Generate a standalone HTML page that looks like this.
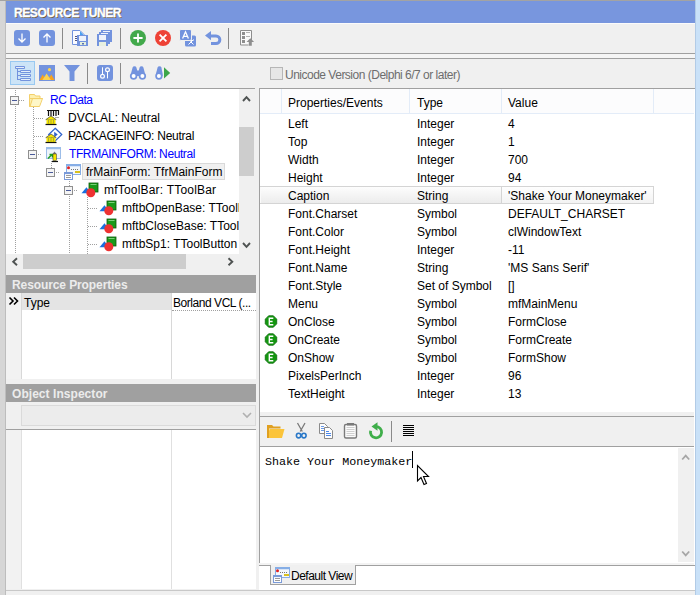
<!DOCTYPE html>
<html><head><meta charset="utf-8">
<style>
*{margin:0;padding:0;box-sizing:border-box}
html,body{width:700px;height:595px;overflow:hidden;background:#f0f0f0}
body{position:relative;font:12px "Liberation Sans",sans-serif;color:#000}
.a{position:absolute}
.t{position:absolute;white-space:nowrap;line-height:14px}
</style></head><body>
<div class="a" style="left:0;top:0;width:5px;height:595px;background:#d6d6d6"></div>
<div class="a" style="left:5px;top:0;width:1px;height:595px;background:#bdbdbd"></div>
<div class="a" style="left:695px;top:0;width:1px;height:595px;background:#b2cbe6"></div><div class="a" style="left:696px;top:0;width:4px;height:595px;background:#c9e1f8"></div>
<div class="a" style="left:0;top:0;width:695px;height:1px;background:#a3a3a3"></div>
<div class="a" style="left:6px;top:590px;width:689px;height:1px;background:#c8c8c8"></div>
<!-- title bar -->
<div class="a" style="left:6px;top:1px;width:689px;height:22px;background:#7896de"></div>
<div class="t" style="left:14px;top:6px;font-weight:bold;font-size:12px;letter-spacing:-0.4px;color:#fff;-webkit-text-stroke:0.35px #fff;text-shadow:1px 1px 0 #6b5a3a">RESOURCE TUNER</div>
<div class="a" style="left:6px;top:23px;width:689px;height:1px;background:#fbfbfb"></div>
<!-- toolbar 1 -->
<div class="a" style="left:6px;top:53px;width:689px;height:1px;background:#a0a0a0"></div>
<div class="a" style="left:6px;top:54px;width:689px;height:4px;background:#f5f5f5"></div>
<div class="a" style="left:6px;top:58px;width:689px;height:1px;background:#a0a0a0"></div>
<svg class="a" style="left:0;top:0" width="700" height="90" viewBox="0 0 700 90">
 <!-- down arrow btn -->
 <rect x="14" y="30" width="16" height="16" rx="3" fill="#7393de"/>
 <path d="M22 33.5v8.5M18.5 38.5l3.5 3.5l3.5-3.5" stroke="#fff" stroke-width="1.3" fill="none"/>
 <!-- up arrow btn -->
 <rect x="39" y="30" width="16" height="16" rx="3" fill="#7393de"/>
 <path d="M47 42.5v-8.5M43.5 37.5l3.5-3.5l3.5 3.5" stroke="#fff" stroke-width="1.3" fill="none"/>
 <rect x="62" y="28" width="1" height="21" fill="#8a8a8a"/>
 <!-- doc + floppy -->
 <path d="M72.5 30.5h7.5l4.5 4.5v9.5h-12z" fill="#fafbff" stroke="#7393de"/>
 <path d="M80 31v4.5h4z" fill="#4aa0f0"/>
 <path d="M75 36.5h2M75 38.5h2M75 40.5h2" stroke="#55557a"/>
 <rect x="77" y="35" width="11" height="11" fill="#7393de"/>
 <rect x="79" y="36" width="7" height="5" fill="#eef2fb"/>
 <rect x="80" y="42" width="6" height="3" fill="#e4efdc"/>
 <rect x="82" y="43" width="2" height="1.5" fill="#5a70b0"/>
 <!-- stacked floppies -->
 <rect x="101" y="30" width="11" height="12" fill="#7393de"/>
 <rect x="103" y="31" width="7" height="2" fill="#eef2fb"/>
 <rect x="99" y="32" width="11" height="12" fill="#7393de"/>
 <rect x="101" y="33" width="7" height="2" fill="#eef2fb"/>
 <rect x="97" y="34" width="11" height="12" fill="#7393de"/>
 <rect x="99" y="35" width="7" height="5" fill="#eef2fb"/>
 <rect x="99" y="42" width="7" height="4" fill="#e8f0e0"/>
 <rect x="120" y="28" width="1" height="21" fill="#8a8a8a"/>
 <!-- green plus -->
 <circle cx="138" cy="38" r="8" fill="#42a94b"/>
 <path d="M138 33.4v9.2M133.4 38h9.2" stroke="#fff" stroke-width="1.8"/>
 <!-- red x -->
 <circle cx="163" cy="38" r="8" fill="#ee4236"/>
 <path d="M159.6 34.6l6.8 6.8M166.4 34.6l-6.8 6.8" stroke="#fff" stroke-width="1.8"/>
 <!-- translate -->
 <rect x="185" y="35.5" width="11" height="11" rx="1.5" fill="#7393de"/>
 <path d="M188.5 44.5l5-5M189 40.5h4.5M190.5 41.5l3 3" stroke="#fff" stroke-width="1" fill="none"/>
 <rect x="179.5" y="29.5" width="12" height="11" rx="1.5" fill="#7393de" stroke="#f0f0f0"/>
 <path d="M182.6 38.6L185.5 31.8L188.4 38.6M183.6 36.4h3.8" stroke="#fff" stroke-width="1.3" fill="none"/>
 <!-- undo -->
 <path d="M210 35.9H216A3.85 3.85 0 0 1 216 43.6H211" stroke="#7393de" stroke-width="3" fill="none"/>
 <path d="M205 35.6L211 30.9V40.3z" fill="#7393de"/>
 <rect x="228" y="28" width="1" height="21" fill="#8a8a8a"/>
 <!-- list up -->
 
 <rect x="241" y="31" width="10.5" height="14" fill="#fafafa"/>
 <rect x="242" y="32" width="3" height="3" fill="#8e8e8e"/>
 <rect x="242" y="36" width="3" height="3" fill="#8e8e8e"/>
 <rect x="242" y="40" width="3" height="3" fill="#8e8e8e"/>
 <path d="M246 32.5h4M246 36.5h4" stroke="#b4b4b4"/>
 <path d="M240.5 30.5h11v10M240.5 30.5v14.5h8" fill="none" stroke="#8e8e8e"/>
 <path d="M250.3 38.2l3.8 3.8h-2.3v3.8h-3v-3.8h-2.3z" fill="#8e8e8e"/>

 <!-- toolbar 2 -->
 <rect x="10.5" y="61.5" width="24" height="23" fill="#cce4f7" stroke="#99c9f1"/>
 <path d="M15.5 66.5h9v2h-9z M20.5 70.5h10v2h-10z M20.5 74.5h10v2h-10z M20.5 78.5h10v2h-10z" fill="#e4eefb" stroke="#7393de"/>
 <path d="M17.5 69v11M18 71.5h2.5M18 75.5h2.5M18 79.5h2.5" stroke="#7393de" fill="none"/>
 <rect x="39" y="65" width="16" height="16" fill="#7393de"/>
 <path d="M39.6 80L42.6 74.6L46 80z M47.6 80L51.3 74.6L54.6 80z" fill="#f7a21e"/>
 <path d="M42.4 80L46.6 73.4L50.9 80z" fill="#fdd34e"/>
 <circle cx="49.5" cy="69.7" r="1.6" fill="#fdd34e"/>
 <path d="M64 65h16l-5.5 6.5v9.5h-5v-9.5z" fill="#7393de"/>
 <rect x="87" y="63" width="1" height="21" fill="#8a8a8a"/>
 <rect x="97" y="65" width="16" height="16" rx="3" fill="#7393de"/>
 <path d="M102.5 67.3v6.8M107.5 71.8v6.6" stroke="#fff" stroke-width="1"/>
 <circle cx="102.5" cy="76.2" r="1.9" fill="none" stroke="#fff" stroke-width="1.2"/>
 <circle cx="107.5" cy="69.7" r="1.9" fill="none" stroke="#fff" stroke-width="1.2"/>
 <rect x="120" y="63" width="1" height="21" fill="#8a8a8a"/>
 <path d="M131 73.5L132.6 67.6Q133 66.3 134.5 66.3Q136 66.3 136.4 67.6L137.2 70.5h1.6L139.6 67.6Q140 66.3 141.5 66.3Q143 66.3 143.4 67.6L145 73.5V76H131z" fill="#7393de"/>
 <circle cx="133.6" cy="76.1" r="3.7" fill="#7393de"/>
 <circle cx="142.4" cy="76.1" r="3.7" fill="#7393de"/>
 <circle cx="133.6" cy="76.1" r="2" fill="#fff"/>
 <circle cx="142.4" cy="76.1" r="2" fill="#fff"/>
 <path d="M156 73.5L157.6 67.6Q158 66.3 159.5 66.3Q161 66.3 161.4 67.6L162.6 73.5V76H156z" fill="#7393de"/>
 <circle cx="158.9" cy="76.1" r="3.7" fill="#7393de"/>
 <circle cx="158.9" cy="76.1" r="2" fill="#fff"/>
 <path d="M164 67.3l6.2 5.6l-6.2 5.6z" fill="#3ca64a"/>
 <!-- checkbox -->
 <rect x="270.5" y="67.5" width="12" height="12" fill="#e6e6e6" stroke="#b6b6b6"/>
</svg>
<div class="t" style="left:285px;top:68px;color:#6d6d6d;letter-spacing:-0.5px">Unicode Version (Delphi 6/7 or later)</div>
<!-- left panel tree -->
<div class="a" style="left:6px;top:88px;width:249px;height:1px;background:#a0a0a0"></div>
<div class="a" style="left:6px;top:89px;width:233px;height:165px;background:#fff;overflow:hidden">
 <svg class="a" style="left:-6px;top:-89px" width="260" height="260" viewBox="0 0 260 260">
  <g stroke="#a0a0a0" stroke-dasharray="1 1" fill="none">
   <path d="M15.5 90v6"/>
   <path d="M19 100.5h5"/>
   <path d="M33.5 107v47"/>
   <path d="M34 118.5h10M34 136.5h10"/>
   <path d="M15.5 106v150"/>
   <path d="M38 154.5h4"/>
   <path d="M51.5 161v7"/>
   <path d="M56 172.5h4"/>
   <path d="M69.5 179v7"/>
   <path d="M74 190.5h4"/>
   <path d="M87.5 197v60"/>
   <path d="M69.5 196v62"/>
   <path d="M88 208.5h10M88 226.5h10M88 244.5h10"/>
  </g>
  <!-- minus boxes -->
  <g>
   <rect x="10.5" y="96.5" width="8" height="8" fill="#f4f4f4" stroke="#8f8f8f"/>
   <path d="M12 100.5h5" stroke="#4a5a9a"/>
   <rect x="28.5" y="150.5" width="8" height="8" fill="#f4f4f4" stroke="#8f8f8f"/>
   <path d="M30 154.5h5" stroke="#4a5a9a"/>
   <rect x="46.5" y="168.5" width="8" height="8" fill="#f4f4f4" stroke="#8f8f8f"/>
   <path d="M48 172.5h5" stroke="#4a5a9a"/>
   <rect x="64.5" y="186.5" width="8" height="8" fill="#f4f4f4" stroke="#8f8f8f"/>
   <path d="M66 190.5h5" stroke="#4a5a9a"/>
  </g>
  <!-- folder -->
  <path d="M29.5 106.5V94.5h5l1 1.5h4.5v2.5" fill="#fdf0b0" stroke="#f3cf6a"/>
  <path d="M29.5 106.5V98.5h13l-3 8z" fill="#fdf0b0" stroke="#f3cf6a"/>
  <path d="M30 106.5l2.5-8h10" fill="none" stroke="#f3cf6a"/>
  <path d="M33 99.5h8.5l-2.5 6.5h-8z" fill="#fef7c8"/>
  <!-- DVCLAL icon -->
  <rect x="47" y="110" width="12" height="8" fill="#fff"/>
  <path d="M47 110.5h12" stroke="#111"/>
  <path d="M48.5 110v6M51 110v6M53.5 110v6M56 110v6M58.5 110v5" stroke="#111" stroke-width="1.2"/>
  <path d="M55 117.5h4" stroke="#aaa"/>
  <path d="M45.8 119.6l5.2-3.6l5.2 3.6z" fill="#f6e600" stroke="#444" stroke-width="0.7"/>
  <rect x="46.5" y="119.5" width="9" height="4.5" fill="#f6e600"/>
  <path d="M48.5 120v3.5M51 120v3.5M53.5 120v3.5" stroke="#9a9a40" stroke-width="0.8"/>
  <path d="M45.5 124.5h11" stroke="#111" stroke-width="1.2"/>
  <!-- PACKAGEINFO icon -->
  <path d="M55.2 128.3l6.5 6.3l-6.5 6.3l-6.5-6.3z" fill="#fff" stroke="#2f62cc" stroke-width="1.3"/>
  <path d="M54.2 131.8l3.5 2.8l-3.5 2.8z" fill="#2f62cc"/>
  <path d="M45.8 137.6l5.2-3.6l5.2 3.6z" fill="#f6e600" stroke="#444" stroke-width="0.7"/>
  <rect x="46.5" y="137.5" width="9" height="4.5" fill="#f6e600"/>
  <path d="M48.5 138v3.5M51 138v3.5M53.5 138v3.5" stroke="#9a9a40" stroke-width="0.8"/>
  <path d="M45.5 142.5h11" stroke="#111" stroke-width="1.2"/>
  <!-- TFRMAINFORM icon -->
  <rect x="46.5" y="147.5" width="14" height="11" fill="#eef4fc" stroke="#9cbde8"/>
  <path d="M47 148.5h13" stroke="#9cbde8" stroke-width="1.5"/>
  <path d="M48 158.5l4-4M49.5 154.5h3v3" stroke="#22a022" stroke-width="1.5" fill="none"/>
  <path d="M52.5 154l2-2.5l2 2.5z" fill="#777"/>
  <rect x="53" y="154" width="3.5" height="6.5" fill="#f6e600" stroke="#333" stroke-width="0.5"/>
  <path d="M52 161.5h6" stroke="#111" stroke-width="1.2"/>
  <!-- frMainForm icon -->
  <g transform="translate(63,163)">
   <rect x="3.5" y="1.5" width="14" height="10" fill="#f4f8fd" stroke="#86aee6"/>
   <path d="M4 2.5h13" stroke="#86aee6" stroke-width="1.5"/>
   <circle cx="5.5" cy="4.8" r="1.5" fill="#e02020"/>
   <path d="M8 6.5h7" stroke="#555" stroke-width="0.8" stroke-dasharray="1 1"/>
   <rect x="12" y="8" width="5" height="2" fill="#d8c020"/>
   <rect x="1.5" y="9.5" width="8" height="7" fill="#fff" stroke="#7a9ad8"/>
   <path d="M2 10.5h7" stroke="#7a9ad8" stroke-width="1.2"/>
   <path d="M3 12.5h5M3 14.5h5" stroke="#9a9a9a"/>
  </g>
  <!-- component icons -->
  <g id="comp">
   <rect x="89" y="183" width="9" height="9" fill="#1a9a1a" stroke="#0a5a0a" stroke-width="0.8"/>
   <path d="M90.5 184.5h6" stroke="#7ad07a" stroke-width="1"/>
   <path d="M81.5 193.2l5-6l4.5 6z" fill="#1a70e0"/>
   <circle cx="90.8" cy="192.8" r="4.5" fill="#ee3232"/>
  </g>
  <use href="#comp" x="18" y="18"/>
  <use href="#comp" x="18" y="36"/>
  <use href="#comp" x="18" y="54"/>
 </svg>
 <div class="t" style="left:44px;top:4px;color:#0000ff;letter-spacing:-0.5px">RC Data</div>
 <div class="t" style="left:62px;top:22px">DVCLAL: Neutral</div>
 <div class="t" style="left:62px;top:40px;letter-spacing:-0.25px">PACKAGEINFO: Neutral</div>
 <div class="t" style="left:63px;top:58px;color:#0000ff;letter-spacing:-0.4px">TFRMAINFORM: Neutral</div>
 <div class="a" style="left:76px;top:74px;width:143px;height:17px;background:#f0f0f0;border:1px solid #d9d9d9"></div>
 <div class="t" style="left:80px;top:76px">frMainForm: TfrMainForm</div>
 <div class="t" style="left:98px;top:94px;letter-spacing:0.2px">mfToolBar: TToolBar</div>
 <div class="t" style="left:116px;top:112px">mftbOpenBase: TToolButton</div>
 <div class="t" style="left:116px;top:130px">mftbCloseBase: TToolButton</div>
 <div class="t" style="left:116px;top:148px">mftbSp1: TToolButton</div>
</div>
<!-- tree vscroll -->
<div class="a" style="left:239px;top:89px;width:16px;height:181px;background:#f0f0f0"></div>
<div class="a" style="left:239px;top:127px;width:15px;height:49px;background:#cdcdcd"></div>
<!-- tree hscroll -->
<div class="a" style="left:6px;top:254px;width:232px;height:16px;background:#f0f0f0"></div>
<div class="a" style="left:23px;top:254px;width:163px;height:15px;background:#cdcdcd"></div>
<svg class="a" style="left:0;top:85px" width="260" height="190" viewBox="0 85 260 190">
 <path d="M243 101l3.5-3.8l3.5 3.8" stroke="#4f5352" stroke-width="1.9" fill="none"/>
 <path d="M243 243l3.5 3.8l3.5-3.8" stroke="#4f5352" stroke-width="1.9" fill="none"/>
 <path d="M17 258.3l-3.8 3.5l3.8 3.5" stroke="#4f5352" stroke-width="1.9" fill="none"/>
 <path d="M228.5 258.3l3.8 3.5l-3.8 3.5" stroke="#4f5352" stroke-width="1.9" fill="none"/>
</svg>
<div class="a" style="left:6px;top:270px;width:250px;height:5px;background:#f0f0f0"></div>

<!-- Resource Properties -->
<div class="a" style="left:6px;top:275px;width:250px;height:18px;background:#a0a0a0"></div>
<div class="t" style="left:12px;top:278px;font-weight:bold;color:#ececec;letter-spacing:-0.1px">Resource Properties</div>
<div class="a" style="left:6px;top:293px;width:250px;height:86px;background:#fff"></div>
<div class="a" style="left:6px;top:293px;width:15px;height:86px;background:#f2f2f2"></div>
<div class="a" style="left:21px;top:293px;width:1px;height:86px;background:#d8d8d8"></div>
<div class="a" style="left:22px;top:293px;width:149px;height:17px;background:#e4e4e4"></div>
<div class="a" style="left:171px;top:293px;width:1px;height:86px;background:#d8d8d8"></div>
<div class="a" style="left:172px;top:310px;width:84px;height:1px;border-top:1px dotted #a0a0a0"></div>
<svg class="a" style="left:8px;top:296px" width="12" height="10"><path d="M1.5 1.5l3.5 3.5l-3.5 3.5M6 1.5l3.5 3.5l-3.5 3.5" stroke="#000" stroke-width="1.6" fill="none"/></svg>
<div class="t" style="left:24px;top:296px">Type</div>
<div class="t" style="left:173px;top:296px;letter-spacing:-0.45px">Borland VCL (...</div>
<div class="a" style="left:6px;top:379px;width:250px;height:5px;background:#f0f0f0"></div>

<!-- Object Inspector -->
<div class="a" style="left:6px;top:384px;width:250px;height:18px;background:#a0a0a0"></div>
<div class="t" style="left:12px;top:387px;font-weight:bold;color:#ececec;letter-spacing:0.05px">Object Inspector</div>
<div class="a" style="left:21px;top:405px;width:235px;height:21px;background:#ececec;border:1px solid #dadada"></div>
<svg class="a" style="left:240px;top:408px" width="14" height="14"><path d="M3 5l4 4l4-4" stroke="#b0b0b0" stroke-width="1.6" fill="none"/></svg>
<div class="a" style="left:6px;top:429px;width:250px;height:1px;background:#a0a0a0"></div>
<div class="a" style="left:6px;top:430px;width:250px;height:159px;background:#fff"></div>
<div class="a" style="left:6px;top:430px;width:15px;height:159px;background:#f2f2f2"></div>
<div class="a" style="left:21px;top:430px;width:1px;height:159px;background:#e0e0e0"></div>
<div class="a" style="left:171px;top:430px;width:1px;height:159px;background:#e0e0e0"></div>
<!-- right panel -->
<div class="a" style="left:256px;top:88px;width:3px;height:502px;background:#f0f0f0"></div>
<div class="a" style="left:259px;top:88px;width:436px;height:1px;background:#a0a0a0"></div>
<div class="a" style="left:259px;top:88px;width:1px;height:475px;background:#a0a0a0"></div><div class="a" style="left:259px;top:563px;width:436px;height:2px;background:#f3f3f3"></div>
<div class="a" style="left:260px;top:89px;width:435px;height:323px;background:#fff"></div>
<div class="a" style="left:260px;top:89px;width:435px;height:24px;background:#fcfcfd"></div>
<div class="a" style="left:260px;top:113px;width:435px;height:1px;background:#e3ecf8"></div>
<div class="a" style="left:281px;top:89px;width:1px;height:24px;background:#e3ecf8"></div>
<div class="a" style="left:409px;top:89px;width:1px;height:24px;background:#e3ecf8"></div>
<div class="a" style="left:501px;top:89px;width:1px;height:24px;background:#e3ecf8"></div>
<div class="a" style="left:653px;top:89px;width:1px;height:24px;background:#e3ecf8"></div>
<div class="t" style="left:288px;top:96px">Properties/Events</div>
<div class="t" style="left:417px;top:96px">Type</div>
<div class="t" style="left:508px;top:96px">Value</div>
<!-- selected row -->
<div class="a" style="left:260px;top:186px;width:394px;height:18px;background:linear-gradient(#fdfdfd,#ececec);box-shadow:inset 1px 0 0 #fafafa;border-top:1px solid #d4d4d4;border-bottom:1px solid #d4d4d4"></div>
<div class="a" style="left:501px;top:186px;width:153px;height:18px;background:linear-gradient(#fefefe,#f3f3f3);border:1px solid #d4d4d4"></div>

<div class="t" style="left:288px;top:117px">Left</div><div class="t" style="left:417px;top:117px">Integer</div><div class="t" style="left:508px;top:117px">4</div>
<div class="t" style="left:288px;top:135px">Top</div><div class="t" style="left:417px;top:135px">Integer</div><div class="t" style="left:508px;top:135px">1</div>
<div class="t" style="left:288px;top:153px">Width</div><div class="t" style="left:417px;top:153px">Integer</div><div class="t" style="left:508px;top:153px">700</div>
<div class="t" style="left:288px;top:171px">Height</div><div class="t" style="left:417px;top:171px">Integer</div><div class="t" style="left:508px;top:171px">94</div>
<div class="t" style="left:288px;top:189px">Caption</div><div class="t" style="left:417px;top:189px">String</div><div class="t" style="left:508px;top:189px">'Shake Your Moneymaker'</div>
<div class="t" style="left:288px;top:207px">Font.Charset</div><div class="t" style="left:417px;top:207px">Symbol</div><div class="t" style="left:508px;top:207px">DEFAULT_CHARSET</div>
<div class="t" style="left:288px;top:225px">Font.Color</div><div class="t" style="left:417px;top:225px">Symbol</div><div class="t" style="left:508px;top:225px">clWindowText</div>
<div class="t" style="left:288px;top:243px">Font.Height</div><div class="t" style="left:417px;top:243px">Integer</div><div class="t" style="left:508px;top:243px">-11</div>
<div class="t" style="left:288px;top:261px">Font.Name</div><div class="t" style="left:417px;top:261px">String</div><div class="t" style="left:508px;top:261px">'MS Sans Serif'</div>
<div class="t" style="left:288px;top:279px">Font.Style</div><div class="t" style="left:417px;top:279px">Set of Symbol</div><div class="t" style="left:508px;top:279px">[]</div>
<div class="t" style="left:288px;top:297px">Menu</div><div class="t" style="left:417px;top:297px">Symbol</div><div class="t" style="left:508px;top:297px">mfMainMenu</div>
<div class="t" style="left:288px;top:315px">OnClose</div><div class="t" style="left:417px;top:315px">Symbol</div><div class="t" style="left:508px;top:315px">FormClose</div>
<div class="t" style="left:288px;top:333px">OnCreate</div><div class="t" style="left:417px;top:333px">Symbol</div><div class="t" style="left:508px;top:333px">FormCreate</div>
<div class="t" style="left:288px;top:351px">OnShow</div><div class="t" style="left:417px;top:351px">Symbol</div><div class="t" style="left:508px;top:351px">FormShow</div>
<div class="t" style="left:288px;top:369px">PixelsPerInch</div><div class="t" style="left:417px;top:369px">Integer</div><div class="t" style="left:508px;top:369px">96</div>
<div class="t" style="left:288px;top:387px">TextHeight</div><div class="t" style="left:417px;top:387px">Integer</div><div class="t" style="left:508px;top:387px">13</div>
<svg class="a" style="left:0;top:0.5px" width="700" height="420"><polygon points="276.73,322.87 273.37,326.23 268.63,326.23 265.27,322.87 265.27,318.13 268.63,314.77 273.37,314.77 276.73,318.13" fill="#13960f" stroke="#0b6a0b" stroke-width="0.8"/><path d="M273.3 317.2h-4v6.6h4M269.3 320.5h3.3" stroke="#fff" stroke-width="1.4" fill="none"/><polygon points="276.73,340.87 273.37,344.23 268.63,344.23 265.27,340.87 265.27,336.13 268.63,332.77 273.37,332.77 276.73,336.13" fill="#13960f" stroke="#0b6a0b" stroke-width="0.8"/><path d="M273.3 335.2h-4v6.6h4M269.3 338.5h3.3" stroke="#fff" stroke-width="1.4" fill="none"/><polygon points="276.73,358.87 273.37,362.23 268.63,362.23 265.27,358.87 265.27,354.13 268.63,350.77 273.37,350.77 276.73,354.13" fill="#13960f" stroke="#0b6a0b" stroke-width="0.8"/><path d="M273.3 353.2h-4v6.6h4M269.3 356.5h3.3" stroke="#fff" stroke-width="1.4" fill="none"/></svg>

<div class="a" style="left:260px;top:412px;width:434px;height:4px;background:#f0f0f0"></div>
<div class="a" style="left:260px;top:416px;width:434px;height:1px;background:#a0a0a0"></div>
<!-- memo toolbar -->
<svg class="a" style="left:0;top:410px" width="700" height="40" viewBox="0 410 700 40">
 <path d="M267 425h5l1.5 1.5h7v2h-13.5z" fill="#e0a020"/>
 <path d="M267 438l2.5-9h15l-2.5 9z" fill="#fbc43a"/>
 <rect x="267" y="428" width="2" height="10" fill="#e0a020"/>
 <path d="M297.5 423l4.8 8.5M305 423l-4.8 8.5" stroke="#7a7a7a" stroke-width="1.3"/>
 <ellipse cx="298.6" cy="435.6" rx="2.2" ry="2.3" fill="none" stroke="#2a78c8" stroke-width="1.6"/>
 <ellipse cx="303.9" cy="435.6" rx="2.2" ry="2.3" fill="none" stroke="#2a78c8" stroke-width="1.6"/>
 <path d="M319.5 423.5h5l3 3v7h-8z" fill="#fdfdfd" stroke="#8a8a8a"/>
 <path d="M321 426.5h3M321 428.5h4M321 430.5h4" stroke="#6a9ae8"/>
 <path d="M324.5 427.5h5l3 3v8h-8z" fill="#fdfdfd" stroke="#8a8a8a"/>
 <path d="M326 431.5h3M326 433.5h5M326 435.5h5" stroke="#4a86e8"/>
 <rect x="344.5" y="424.5" width="12" height="13.5" rx="1.5" fill="#fbfbfb" stroke="#7a7a7a" stroke-width="1.4"/>
 <rect x="347" y="423" width="7" height="2.5" fill="#7a7a7a"/>
 <path d="M346.5 427.5h8M346.5 429.5h8M346.5 431.5h8M346.5 433.5h8M346.5 435.5h8" stroke="#cfcfcf"/>
 <path d="M370.6 430.75A5.6 5.6 0 1 0 376 426.6" stroke="#3fae4a" stroke-width="2.8" fill="none"/>
 <path d="M371.5 426.5L377.5 422.3V430.7z" fill="#3fae4a"/>
 <rect x="391" y="421" width="1" height="21" fill="#8a8a8a"/>
 <path d="M403 425.5h11M403 427.5h11M403 429.5h11M403 431.5h11M403 433.5h11M403 435.5h11" stroke="#000"/>
</svg>
<div class="a" style="left:260px;top:446px;width:434px;height:1px;background:#a0a0a0"></div>
<!-- memo -->
<div class="a" style="left:260px;top:447px;width:435px;height:116px;background:#fff"></div>
<div class="a" style="left:678px;top:448px;width:16px;height:114px;background:#f0f0f0"></div>
<svg class="a" style="left:678px;top:447px" width="16" height="116">
 <path d="M4.2 12.5l3.5-3.8l3.5 3.8" stroke="#a6a6a6" stroke-width="1.8" fill="none"/>
 <path d="M4.2 104.5l3.5 3.8l3.5-3.8" stroke="#a6a6a6" stroke-width="1.8" fill="none"/>
</svg>
<div class="t" style="left:265px;top:455px;font:11.7px 'Liberation Mono',monospace;line-height:14px;color:#000">Shake Your Moneymaker</div>
<div class="a" style="left:412px;top:451px;width:1px;height:17px;background:#000"></div>
<svg class="a" style="left:416px;top:464px" width="16" height="24">
 <path d="M1.5 1.5V17L5 13.5L8 20.5L10.5 19.5L7.5 12.5H12.5Z" fill="#fff" stroke="#000" stroke-width="1.1" stroke-linejoin="miter"/>
</svg>

<div class="a" style="left:694px;top:89px;width:1px;height:501px;background:#fff"></div>
<!-- tabs -->
<div class="a" style="left:259px;top:565px;width:436px;height:1px;background:#a0a0a0"></div>
<div class="a" style="left:259px;top:566px;width:436px;height:24px;background:#fff"></div>
<div class="a" style="left:270px;top:565px;width:86px;height:20px;background:#f0f0f0;border:1px solid #a0a0a0;border-top:none"></div>
<svg class="a" style="left:272px;top:566px" width="20" height="18">
 <rect x="3.5" y="1.5" width="14" height="10" fill="#f4f8fd" stroke="#86aee6"/>
 <path d="M4 2.5h13" stroke="#86aee6" stroke-width="1.5"/>
 <circle cx="5.5" cy="4.8" r="1.5" fill="#e02020"/>
 <path d="M8 6.5h7" stroke="#555" stroke-width="0.8" stroke-dasharray="1 1"/>
 <rect x="12" y="8" width="5" height="2" fill="#d8c020"/>
 <rect x="1.5" y="9.5" width="8" height="7" fill="#fff" stroke="#7a9ad8"/>
 <path d="M2 10.5h7" stroke="#7a9ad8" stroke-width="1.2"/>
 <path d="M3 12.5h5M3 14.5h5" stroke="#9a9a9a"/>
</svg>
<div class="t" style="left:291px;top:569px;letter-spacing:-0.5px">Default View</div>

</body></html>
